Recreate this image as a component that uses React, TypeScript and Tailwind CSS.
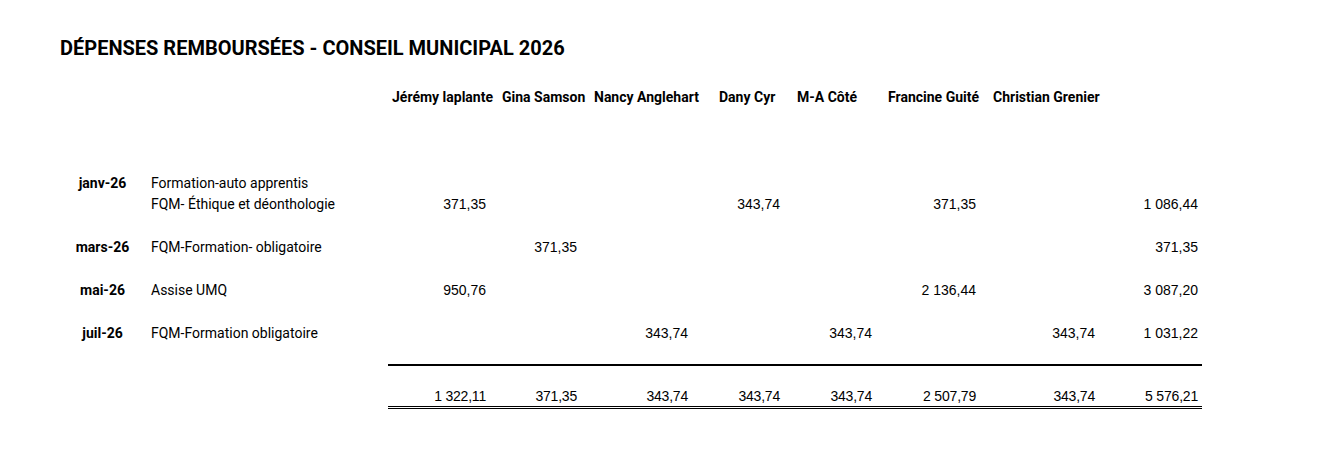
const cols = 'grid-cols-[85px_243px_102px_91px_111px_92px_92px_104px_119px_103px]';

type Row = {
  date?: string;
  desc?: string;
  values?: (string | null)[];
};

const members = [
  { name: 'Jérémy laplante', pad: 'pl-[4px]' },
  { name: 'Gina Samson', pad: 'pl-[12px]' },
  { name: 'Nancy Anglehart', pad: 'pl-[13px]' },
  { name: 'Dany Cyr', pad: 'pl-[27px]' },
  { name: 'M-A Côté', pad: 'pl-[13px]' },
  { name: 'Francine Guité', pad: 'pl-[12px]' },
  { name: 'Christian Grenier', pad: 'pl-[13px]' },
];

// une ligne = 8 montants (7 élus + total)
const rows: Row[] = [
  { date: 'janv-26', desc: 'Formation-auto apprentis' },
  { desc: 'FQM- Éthique et déonthologie', values: ['371,35', null, null, '343,74', null, '371,35', null, '1 086,44'] },
  {},
  { date: 'mars-26', desc: 'FQM-Formation- obligatoire', values: [null, '371,35', null, null, null, null, null, '371,35'] },
  {},
  { date: 'mai-26', desc: 'Assise UMQ', values: ['950,76', null, null, null, null, '2 136,44', null, '3 087,20'] },
  {},
  { date: 'juil-26', desc: 'FQM-Formation obligatoire', values: [null, null, '343,74', null, '343,74', null, '343,74', '1 031,22'] },
];

const totals = ['1 322,11', '371,35', '343,74', '343,74', '343,74', '2 507,79', '343,74', '5 576,21'];

const label = "font-['Roboto','Liberation_Sans',sans-serif]";
const num = "font-['Liberation_Sans','Arial',sans-serif]";

function Cell({ children, className = '' }: { children?: React.ReactNode; className?: string }) {
  return <div className={`flex items-center h-[21.5px] whitespace-nowrap ${className}`}>{children}</div>;
}

export default function App() {
  return (
    <div className="min-h-[454px] bg-white text-black pl-[60px] pt-[36px]">
      <h1 className={`${label} text-[20px] leading-[24px] font-bold`}>
        DÉPENSES REMBOURSÉES - CONSEIL MUNICIPAL 2026
      </h1>

      <div className={`grid ${cols} mt-[26.5px] text-[14px]`}>
        {/* en-têtes */}
        <Cell />
        <Cell />
        {members.map((m) => (
          <Cell key={m.name} className={`${label} font-bold ${m.pad}`}>
            {m.name}
          </Cell>
        ))}
        <Cell />

        {/* lignes vides */}
        {[0, 1, 2].map((i) => (
          <div key={i} className="col-span-10 h-[21.5px]" />
        ))}

        {rows.map((r, i) =>
          r.desc ? (
            <div key={i} className="contents">
              <Cell className={`${label} font-bold justify-center`}>{r.date}</Cell>
              <Cell className={`${label} pl-[6px]`}>{r.desc}</Cell>
              {Array.from({ length: 8 }).map((_, j) => (
                <Cell key={j} className={`${num} justify-end pr-[4px]`}>
                  {r.values?.[j] ?? ''}
                </Cell>
              ))}
            </div>
          ) : (
            <div key={i} className="col-span-10 h-[21.5px]" />
          )
        )}

        {/* trait au-dessus des totaux */}
        <Cell />
        <Cell />
        <div className="col-span-8 h-[21.5px] border-b-2 border-black" />
        <div className="col-span-2 h-[21.5px]" />
        <div className="col-span-8 h-[21.5px]" />

        {/* totaux */}
        <Cell />
        <Cell />
        {totals.map((t, j) => (
          <Cell key={j} className={`${num} justify-end pr-[4px] border-b-[3px] border-double border-black tracking-[-0.2px]`}>
            {t}
          </Cell>
        ))}
      </div>
    </div>
  );
}
